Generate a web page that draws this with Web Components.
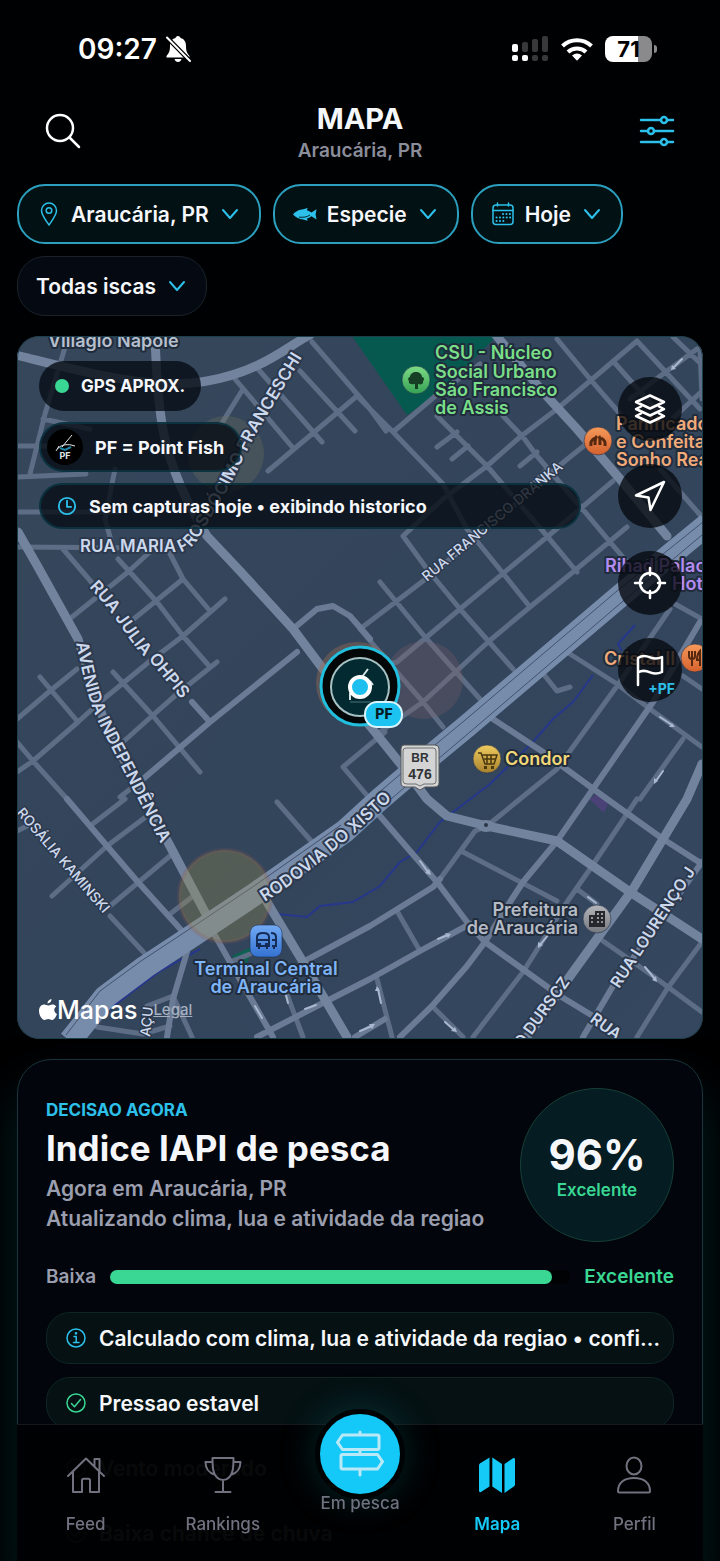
<!DOCTYPE html>
<html lang="pt-BR">
<head>
<meta charset="utf-8">
<meta name="viewport" content="width=device-width, initial-scale=1">
<title>Mapa</title>
<style>
    :root {
        --accent: #2cc0ea;
        --good: #3ad794;
        --text: #f5f7fb;
        --muted: #9b9eae;
        --dim: #70727f;
    }

    html {
        background: #000102;
    }

    body {
        margin: 0;
        color: var(--text);
        font-family: Inter, "Liberation Sans", sans-serif;
        font-weight: 600;
    }
</style>
</head>
<body>
<fishing-app></fishing-app>

<script>
// line icons, drawn with currentColor
const icons = {
    search: { box: '0 0 36 36', body: '<circle cx="15" cy="15" r="13"/><path d="M24.500 24.500 34 34"/>' },
    sliders: { box: '0 0 36 30', body: '<path d="M2 4h20M28 4h6M2 15h7M15 15h19M2 26h20M28 26h6"/><circle cx="25" cy="4" r="3"/><circle cx="12" cy="15" r="3"/><circle cx="25" cy="26" r="3"/>' },
    chevron: { box: '0 0 18 18', body: '<path d="M2 5l7 8 7-8"/>' },
    pin: { box: '0 0 24 24', body: '<path d="M12 23C8 17 4.500 13 4.500 8.500a7.500 7.500 0 0 1 15 0C19.500 13 16 17 12 23z"/><circle cx="12" cy="8.500" r="2.800"/>' },
    fish: { box: '0 0 26 16', body: '<path fill="currentColor" stroke="none" d="M0 8C4 4 7 3 11 2.500L16 1l-1 2.500c2 .7 3.500 1.500 5 2.500l5.500-3.500-1 5.500 1 5.500-5.500-3.500c-1.500 1.300-3.500 2.200-5 2.500l1 2.500-5-1.500C7 13 3 11.500 0 8z"/><path stroke="#04171b" stroke-width="1" d="M7 11c4 .5 8 0 11-2"/>' },
    calendar: { box: '0 0 24 24', body: '<rect x="2" y="3" width="20" height="19.500" rx="3"/><path d="M2 8.500h20M6.500 1v3M17.500 1v3"/><path stroke-dasharray=".1 3.300" stroke-width="2" d="M12 12h8M5.500 15.500h14M5.500 19h9"/>' },
    clock: { box: '0 0 22 22', body: '<circle cx="11" cy="11" r="9"/><path d="M11 5v7h4.500"/>' },
    info: { box: '0 0 22 22', body: '<circle cx="11" cy="11" r="9"/><path d="M9 9.500h2.200V15.500M8.500 15.500h5.500"/><circle cx="11" cy="6.300" r=".6"/>' },
    check: { box: '0 0 22 22', body: '<circle cx="11" cy="11" r="9"/><path d="M6.500 11.500l3 3.300 6-7.300"/>' },
    layers: { box: '0 0 32 32', body: '<path d="M16 2.500l14 6.500-14 6.500L2 9zM7 13.500 2 16l14 6.500L30 16l-5-2.500M7 20.500 2 23l14 6.500L30 23l-5-2.500"/>' },
    navigate: { box: '0 0 32 32', body: '<path d="M30 2 16.500 30 14.500 17.500 2 15.500z"/>' },
    locate: { box: '0 0 32 32', body: '<circle cx="16" cy="16" r="10"/><path d="M16 1v7M16 24v7M1 16h7M24 16h7"/>' },
    flag: { box: '0 0 32 32', body: '<path d="M4 31V4c4-3 8-2.500 12-.7s8 1.700 12-.3v15c-4 2-8 2-12 .3S8 16 4 18.500"/>' },
    home: { box: '0 0 40 40', body: '<path d="M2 21 20 3.500 38 21M7 17v20h9V25.500c0-1 .7-1.800 1.800-1.800h4.400c1 0 1.800.8 1.800 1.800V37h9V17M28.500 11V4h5v12"/>' },
    trophy: { box: '0 0 40 40', body: '<path d="M9.500 3h21c0 4 0 9-1 13-1 4.500-4.500 9-9.500 9s-8.500-4.500-9.500-9c-1-4-1-9-1-13zM20 25v12M12.500 37h15M9.500 7H2.500c0 6 3.500 11 9 12.500M30.500 7h7c0 6-3.500 11-9 12.500"/>' },
    signs: { box: '0 0 48 48', body: '<path d="M24 2v3M24 19.500v5M24 39v6M6.500 5H41.500a1.500 1.500 0 0 1 1.500 1.500v11.500a1.500 1.500 0 0 1-1.500 1.500H6.500L1.500 12.300zM6.500 24.500H41.500L46.500 31.700 41.500 39H6.500A1.500 1.500 0 0 1 5 37.500V26a1.500 1.500 0 0 1 1.500-1.500z"/>' },
    map: { box: '0 0 40 40', body: '<path fill="currentColor" stroke="none" d="M12.500 2.500v29L4 37c-1 .6-2 0-2-1.200V11c0-1.200.3-2 1.200-2.700zM15.300 2.500 25 9v29l-9.700-6.500zM27.500 9l8.500-5.700c1-.6 2 0 2 1.200v24.800c0 1-.3 1.700-1.200 2.300L27.500 38z"/>' },
    person: { box: '0 0 40 40', body: '<ellipse cx="20" cy="11" rx="7.500" ry="8.500"/><path d="M4 36c0-8 6-13 16-13s16 5 16 13c0 .7-.5 1.500-1.500 1.500h-29c-1 0-1.500-.8-1.500-1.500z"/>' }
}

class UiIcon extends HTMLElement {
    constructor() {
        super()
        this.attachShadow({ mode: 'open' })
    }

    connectedCallback() {
        const icon = icons[this.getAttribute('name')]

        this.shadowRoot.innerHTML = `
            <svg viewBox="${icon.box}" aria-hidden="true">${icon.body}</svg>
            <style>
            :host {
                display: block;
                flex: none;
                width: 24px;
            }

            svg {
                display: block;
                width: 100%;
                overflow: visible;
                fill: none;
                stroke: currentColor;
                stroke-width: var(--stroke, 2);
                stroke-linecap: round;
                stroke-linejoin: round;
            }
            </style>
        `
    }
}

class StatusBar extends HTMLElement {
    constructor() {
        super()
        this.attachShadow({ mode: 'open' })
    }

    connectedCallback() {
        this.shadowRoot.innerHTML = /* html */ `
            <div class="side">
                <time>09:27</time>
                <svg width="26" height="28" viewBox="0 0 26 28" fill="#fff">
                    <path d="M13 1c1.500 0 2.300 1 2.500 2 4 1 5.500 4 5.500 8 0 6 1.500 7.500 3.500 10v1.500h-23V21C3.500 18.500 5 17 5 11c0-4 1.500-7 5.500-8 .2-1 1-2 2.500-2z"/>
                    <path d="M9.500 24h7c-.5 2-1.800 3-3.500 3s-3-1-3.500-3z"/>
                    <path d="M2 2.500 25 26" stroke="#000" stroke-width="4.500"/>
                    <path d="M2 2.500 25 26" stroke="#fff" stroke-width="2" stroke-linecap="round"/>
                </svg>
            </div>
            <div class="side">
                <svg width="38" height="26" viewBox="0 0 38 26" fill="#fff">
                    <rect x="1" y="8" width="6" height="8" rx="2"/>
                    <rect x="1" y="19" width="6" height="6" rx="2"/>
                    <rect x="11" y="19" width="6" height="6" rx="2"/>
                    <g fill="#38383a">
                        <rect x="11" y="6" width="6" height="10" rx="2"/>
                        <rect x="21" y="3" width="6" height="13" rx="2"/>
                        <rect x="31" y="0" width="6" height="16" rx="2"/>
                        <rect x="21" y="19" width="6" height="6" rx="2"/>
                        <rect x="31" y="19" width="6" height="6" rx="2"/>
                    </g>
                </svg>
                <svg width="32" height="24" viewBox="0 0 32 24" fill="none" stroke="#fff" stroke-width="4">
                    <path d="M1.500 9a21 21 0 0 1 29 0M7 15a13 13 0 0 1 18 0"/>
                    <path fill="#fff" stroke="none" d="M11 18.500a8 8 0 0 1 10 0l-5 5.300z"/>
                </svg>
                <div class="battery"><span>71</span></div>
            </div>
            <style>
            :host {
                display: flex;
                justify-content: space-between;
                align-items: center;
                height: 98px;
                padding: 0 47px 0 61px;
            }

            .side {
                display: flex;
                align-items: center;
                gap: 8px;
            }

            .side + .side {
                gap: 12px;
            }

            time {
                font-size: 28px;
                color: #fff;
            }

            .battery {
                position: relative;
                width: 47px;
                height: 26px;
                border-radius: 8px;
                background: linear-gradient(90deg, #fff 71%, #8a8a8c 71%);
                color: #000;
                font-size: 22px;
                font-weight: 700;
                line-height: 26px;
                text-align: center;
                margin-right: 4px;
            }

            .battery::after {
                content: '';
                position: absolute;
                left: 49px;
                top: 9px;
                width: 3px;
                height: 8px;
                border-radius: 0 3px 3px 0;
                background: #8a8a8c;
            }
            </style>
        `
    }
}

class AppHeader extends HTMLElement {
    constructor() {
        super()
        this.attachShadow({ mode: 'open' })
    }

    connectedCallback() {
        this.shadowRoot.innerHTML = /* html */ `
            <button aria-label="Buscar"><ui-icon name="search"></ui-icon></button>
            <div class="titles">
                <h1><slot name="title"></slot></h1>
                <p><slot name="place"></slot></p>
            </div>
            <button class="filters" aria-label="Filtros"><ui-icon name="sliders"></ui-icon></button>
            <style>
            :host {
                display: flex;
                justify-content: space-between;
                align-items: flex-start;
                padding: 4px 28px 18px;
            }

            .titles {
                text-align: center;
            }

            h1, p {
                margin: 0;
            }

            h1 {
                font-size: 29px;
                font-weight: 700;
                line-height: 34px;
            }

            p {
                font-size: 19px;
                line-height: 30px;
                color: #8b8d9b;
            }

            button {
                display: flex;
                align-items: center;
                height: 58px;
                padding: 0;
                border: 0;
                background: none;
                color: #fff;
            }

            button ui-icon {
                width: 36px;
                --stroke: 2.500;
            }

            .filters {
                color: var(--accent);
            }
            </style>
        `
    }
}

class FilterChip extends HTMLElement {
    constructor() {
        super()
        this.attachShadow({ mode: 'open' })
    }

    connectedCallback() {
        const icon = this.getAttribute('icon')

        this.shadowRoot.innerHTML = `
            <button aria-haspopup="listbox">
                ${icon ? `<ui-icon name="${icon}"></ui-icon>` : ''}
                <slot></slot>
                <ui-icon class="arrow" name="chevron"></ui-icon>
            </button>
            <style>
            :host {
                display: block;
            }

            button {
                display: flex;
                align-items: center;
                gap: 10px;
                height: 60px;
                padding: 0 18px;
                border: 1px solid #1a222b;
                border-radius: 28px;
                background: #050a12;
                color: var(--text);
                font: inherit;
                font-size: 21px;
            }

            :host([active]) button {
                border: 2px solid #2b9fbd;
                background: #021114;
            }

            ui-icon {
                color: var(--accent);
                --stroke: 1.500;
            }

            .arrow {
                width: 18px;
                --stroke: 2;
                margin: 0 2px;
            }
            </style>
        `
    }
}

class MapPill extends HTMLElement {
    constructor() {
        super()
        this.attachShadow({ mode: 'open' })
    }

    connectedCallback() {
        this.shadowRoot.innerHTML = /* html */ `
            <slot name="mark"></slot>
            <span><slot></slot></span>
            <style>
            :host {
                box-sizing: border-box;
                display: flex;
                align-items: center;
                gap: 12px;
                height: 50px;
                padding: 0 16px;
                border-radius: 25px;
                background: rgba(6, 12, 20, .8);
                font-size: 17px;
                font-weight: 700;
            }

            :host([outlined]) {
                border: 2px solid rgba(8, 66, 82, .6);
                font-size: 18px;
            }

            :host([wide]) {
                align-self: stretch;
                height: 46px;
            }
            </style>
        `
    }
}

class MapButton extends HTMLElement {
    constructor() {
        super()
        this.attachShadow({ mode: 'open' })
    }

    connectedCallback() {
        this.shadowRoot.innerHTML = `
            <button aria-label="${this.getAttribute('label')}">
                <ui-icon name="${this.getAttribute('icon')}"></ui-icon>
                <slot></slot>
            </button>
            <style>
            :host {
                display: block;
            }

            button {
                position: relative;
                display: flex;
                align-items: center;
                justify-content: center;
                width: 64px;
                height: 64px;
                padding: 0;
                border: 0;
                border-radius: 50%;
                background: rgba(5, 9, 14, .78);
                color: #fff;
                font: inherit;
            }

            ui-icon {
                width: 32px;
                --stroke: 2.500;
            }

            ::slotted(b) {
                position: absolute;
                right: 7px;
                bottom: 5px;
                color: var(--accent);
                font-size: 14px;
                font-weight: 700;
            }
            </style>
        `
    }
}

// street groups by width, as path data in map units
const streets = {
    small: `
        M360 400 393 433 443 485 467 530 502 573 530 608 M437 417 487 467 547 537 577 573
        M427 570 403 537 443 500 487 467 520 438 557 410 590 382 637 342
        M393 433 440 393 480 365 M503 417 523 438 537 457 580 507 610 543 640 578
        M437 448 457 433 M452 460 468 447 M520 467 537 453
        M360 630 423 582 487 530 565 462 590 442
        M340 680 397 663 460 610 547 538 613 482 M380 733 423 703 488 643 530 608 573 573 627 528
        M427 570 460 610 513 670 M380 583 425 638 480 700 M360 630 383 657 423 703 443 728
        M557 340 590 380 640 438 M637 342 700 410 M697 350 663 375 630 400 M673 338 702 366
        M613 362 668 424 702 392 M660 470 702 518 M547 470 520 500 M700 350 702 400
        M258 370 322 443 M300 372 355 432 M312 343 370 410 386 432 M357 397 268 472 M243 390 222 424 M235 380 293 449
        M18 447 52 447 M30 475 45 415 66 345 M18 478 86 475 M18 513 120 513 M43 420 90 430
        M115 470 105 520 112 545 M18 548 150 549 M63 550 93 585
        M118 560 157 603 183 637 210 668 M165 545 183 580 210 612 M72 618 128 573 153 550
        M130 623 183 580 M17 720 50 692 77 670 M100 703 150 662 183 637 225 600
        M17 773 33 762 78 723 100 703 M123 743 152 717 177 695 217 663 M40 678 78 723
        M113 673 153 717 200 773 M17 743 33 762 67 800 M120 798 143 780 M90 827 125 800
        M52 897 107 847 147 817 M110 907 170 857 M170 915 192 898
        M110 917 147 957 M17 832 27 827 M147 1007 173 997 192 1038 M97 1028 143 1035 170 1027
        M230 963 250 955 M343 768 385 733 M343 768 370 800
        M277 803 312 843 M397 912 420 952 M377 980 392 1038 M432 1007 463 1038
        M463 853 557 902 M577 890 597 905 M603 942 653 977 702 1013 M702 943 667 990 637 1038
        M487 827 520 800 557 770 617 687 670 610 M637 800 590 870 567 903 523 973 473 1038
        M640 800 683 740 M570 655 617 685 650 710 702 748 M545 677 557 692 570 688
        M487 827 475 832 440 880 M675 605 702 620 M683 677 702 690 M283 985 303 1038`,
    medium: `
        M143 780 210 723 297 653 M192 703 210 723 M293 630 317 610 333 607 350 617 370 640
        M67 800 107 847 137 882 183 933 M187 953 173 1000 167 1038 M303 963 370 927 433 888 440 880
        M257 1038 317 1007 370 980 420 952 470 925 M355 1038 385 1020
        M380 817 410 852 437 883 467 923 485 943 560 997 593 1017
        M700 623 653 703 593 790 557 842 523 883 510 903 485 943 467 967 432 1007 400 1038
        M493 720 543 753 607 800 663 840 702 865 M702 863 613 987 583 1038
        M213 933 230 963 273 1038`,
    large: `
        M18 533 38 568 78 640 M78 640 105 725 150 810 170 847 207 917 M267 903 303 963 347 1038
        M702 765 687 800 633 890 573 973 527 1038
        M427 800 447 817 487 827 557 842 630 893 702 940
        M20 357C80 372 150 392 207 382S290 345 310 336
        M155 335C156 370 158 400 162 425S178 490 207 537 M207 537 240 572 293 630 323 670 370 727 407 773 427 800
        M495 335 543 393 577 430 620 480 667 537`
}

class FishMap extends HTMLElement {
    constructor() {
        super()
        this.attachShadow({ mode: 'open' })
    }

    connectedCallback() {
        this.shadowRoot.innerHTML = /* html */ `
            <svg class="canvas" viewBox="17 337 686 703" role="img" aria-label="Mapa de Araucária">
                <defs>
                    <linearGradient id="land" x1="0" y1="0" x2="1" y2="1">
                        <stop offset="0" stop-color="#36475b"/>
                        <stop offset=".5" stop-color="#33455b"/>
                        <stop offset="1" stop-color="#35475f"/>
                    </linearGradient>
                    <linearGradient id="blue" x1="0" y1="0" x2="0" y2="1">
                        <stop offset="0" stop-color="#72aaf4"/><stop offset="1" stop-color="#3472d2"/>
                    </linearGradient>
                    <linearGradient id="gold" x1="0" y1="0" x2="0" y2="1">
                        <stop offset="0" stop-color="#efcc5f"/><stop offset="1" stop-color="#a8812d"/>
                    </linearGradient>
                    <linearGradient id="orange" x1="0" y1="0" x2="0" y2="1">
                        <stop offset="0" stop-color="#f69a5b"/><stop offset="1" stop-color="#d4612d"/>
                    </linearGradient>
                    <linearGradient id="green" x1="0" y1="0" x2="0" y2="1">
                        <stop offset="0" stop-color="#7edb86"/><stop offset="1" stop-color="#35a254"/>
                    </linearGradient>
                    <linearGradient id="grey" x1="0" y1="0" x2="0" y2="1">
                        <stop offset="0" stop-color="#b4b6bb"/><stop offset="1" stop-color="#75787e"/>
                    </linearGradient>
                    <path id="maria" d="M80 553H178Q189 553 198 540L228 490 254 438 324 322"/>
                    <path id="julia" d="M89 588Q108 608 124 632T150 662L206 730"/>
                    <path id="avenida" d="M76 644 83 676Q92 714 106 738L182 886"/>
                    <path id="rosalia" d="M16 814 130 946"/>
                    <path id="rodovia" d="M265 903Q325 865 415 778"/>
                    <path id="dranka" d="M427 583 600 439"/>
                    <path id="lourenco" d="M619 990 730 820"/>
                    <path id="durscz" d="M522 1050 600 942"/>
                </defs>

                <rect x="17" y="337" width="686" height="703" fill="url(#land)"/>
                <path fill="#06594f" d="M352 337 407 416 440 393 497 337z"/>
                <path fill="#0c6152" d="M232 957 253 947 247 965 238 963z"/>
                <path fill="#4a4276" d="M589 800l10-6 10 8-5 12z"/>

                <g fill="none" stroke="#26378d" stroke-width="2">
                    <path d="M635 626 618 645 622 652M593 676 573 703 553 720 533 743 490 785 440 823 417 853 400 863 380 887 353 903 320 907 307 918 267 914M200 950 160 972 87 1027"/>
                </g>

                <g class="roads">
                    <path stroke="#5d6d86" stroke-width="5" d="${streets.small}"/>
                    <path stroke="#6b7b95" stroke-width="6" d="${streets.medium}"/>
                    <path stroke="#72839d" stroke-width="9" d="${streets.large}"/>
                    <ellipse cx="486" cy="827" rx="9" ry="6" fill="#72839d"/>
                </g>
                <circle cx="486" cy="826" r="2" fill="#2a3648"/>

                <g fill="none" stroke-linejoin="round">
                    <path stroke="#778bab" stroke-width="23" d="M708 525 620 597 467 727 427 760 380 800 345 832 258 893 180 945 145 968 105 998 70 1042"/>
                    <path stroke="#42526f" stroke-width="1" d="M708 519 617 592 464 722 424 755 376 796 M708 531 622 603 470 733 431 766 384 806M341 826 254 887 176 939 141 962 100 992 66 1036"/>
                </g>

                <g fill="none" stroke="#a9b8ce" stroke-width="2" stroke-linecap="round">
                    <path d="M673 369l9-9M420 862l8 11M438 940l10-4M540 946l8-10M378 990l3 14M360 1032l12-5M445 1023l9 8M588 898l8 6M645 968l10 12M660 718l12 8M656 782l7-10M255 1007l7 12M305 1010l11-4M286 996l2 8"/>
                </g>
                <path fill="#a9b8ce" d="M671 371l1-5 4 4zM431 876l-6-2 4-4zM451 935l-3 4-3-5zM538 949l0-6 5 3zM377 987l-2 5h5zM375 1025l-3 5-3-5zM457 1033l-6-1 4-4zM657 983l-5-2 4-4zM675 728l-6 0 3-4zM654 785l0-6 4 3z"/>

                <g>
                    <circle cx="225" cy="897" r="46" fill="#9a8f4d" fill-opacity=".32" stroke="#8b5b51" stroke-opacity=".22" stroke-width="4"/>
                    <circle cx="424" cy="681" r="39" fill="#7a5e68" fill-opacity=".3"/>
                    <circle cx="226" cy="455" r="38" fill="#717559" fill-opacity=".3"/>
                    <circle cx="357" cy="684" r="41" fill="#9a6c50" fill-opacity=".4"/>
                </g>

                <g class="street" font-size="17">
                    <text><textPath href="#maria">RUA MARIA PROSDÓCIMO FRANCESCHI</textPath></text>
                    <text><textPath href="#julia">RUA JULIA OHPIS</textPath></text>
                    <text><textPath href="#avenida">AVENIDA INDEPENDÊNCIA</textPath></text>
                    <text><textPath href="#rodovia">RODOVIA DO XISTO</textPath></text>
                    <text font-size="16"><textPath href="#lourenco">RUA LOURENÇO J</textPath></text>
                    <text font-size="16"><textPath href="#durscz">O DURSCZ</textPath></text>
                    <text font-size="16" transform="translate(589 1022) rotate(36)">RUA</text>
                </g>
                <g class="street thin" font-size="14">
                    <text><textPath href="#rosalia">ROSÁLIA KAMINSKI</textPath></text>
                    <text><textPath href="#dranka">RUA FRANCISCO DRANKA</textPath></text>
                    <text transform="translate(150 1038) rotate(-84)">AÇU</text>
                </g>

                <g class="place">
                    <text x="48" y="348" fill="#b6bfcd">Villagio Napole</text>
                    <g fill="#7ade89">
                        <text x="435" y="360">CSU - Núcleo</text>
                        <text x="435" y="379">Social Urbano</text>
                        <text x="435" y="397">São Francisco</text>
                        <text x="435" y="415">de Assis</text>
                    </g>
                    <g fill="#f2ab78">
                        <text x="616" y="431">Panificadora</text>
                        <text x="616" y="449">e Confeitaria</text>
                        <text x="616" y="467">Sonho Real</text>
                        <text x="604" y="666">Cristal II</text>
                    </g>
                    <g fill="#b48bf0">
                        <text x="605" y="573">Rihad Palace</text>
                        <text x="672" y="591">Hotel</text>
                    </g>
                    <text x="505" y="766" fill="#f3d878">Condor</text>
                    <g fill="#b5bbc5" text-anchor="end">
                        <text x="578" y="917">Prefeitura</text>
                        <text x="578" y="935">de Araucária</text>
                    </g>
                    <g fill="#7fb5f7" text-anchor="middle">
                        <text x="266" y="976">Terminal Central</text>
                        <text x="266" y="994">de Araucária</text>
                    </g>
                </g>

                <g stroke="#23304a" stroke-opacity=".6">
                    <circle cx="416" cy="381" r="14" fill="url(#green)"/>
                    <circle cx="598" cy="442" r="14" fill="url(#orange)"/>
                    <circle cx="695" cy="659" r="14" fill="url(#orange)"/>
                    <circle cx="487" cy="760" r="14" fill="url(#gold)"/>
                    <circle cx="597" cy="920" r="14" fill="url(#grey)"/>
                    <rect x="250" y="926" width="32" height="32" rx="8" fill="url(#blue)"/>
                </g>

                <!-- tree -->
                <path fill="#173f26" d="M415 390v-5c-5 1-7-1-6-3-2-2 0-4 1-4 0-3 3-5 6-5s6 2 6 5c2 0 3 3 1 4 1 3-2 4-5 3v5z"/>
                <!-- croissant -->
                <path fill="none" stroke="#56280f" stroke-width="3" d="M591 447c-1-5 2-7 4-8M595 446c0-5 1-8 2-9M600 446c0-5 0-8-1-9M605 447c1-5-2-7-4-8"/>
                <!-- fork and knife -->
                <path fill="none" stroke="#56280f" stroke-width="2" d="M689 652v5q0 3 3 3t3-3v-5M692 652v15M700 667v-15q-3 3-3 9h3"/>
                <!-- shopping cart -->
                <path fill="none" stroke="#4b390e" stroke-width="1.500" d="M478 754h3l4 11h9l3-9h-15M484 760h12M487 756v9M491 756v9"/>
                <path fill="#4b390e" d="M484 767h3v3h-3zM491 767h3v3h-3z"/>
                <!-- town hall -->
                <path fill="#26282d" fill-rule="evenodd" d="M589 928v-12h6v-4h10v16zM591 918v2h2v-2zM591 922v2h2v-2zM597 914v2h2v-2zM601 914v2h2v-2zM597 918v2h2v-2zM601 918v2h2v-2zM597 922v2h2v-2zM601 922v2h2v-2z"/>
                <!-- bus -->
                <g fill="none" stroke="#152c56" stroke-width="2">
                    <path d="M257 947v-9q0-4 6-4t6 4v9zM257 941h12M271 934q5 0 5 4v9h-4M272 941h4"/>
                    <path d="M259 948v2M267 948v2M274 948v2M258 945h3M265 945h3"/>
                </g>

                <!-- highway shield -->
                <path fill="#d3d4d3" stroke="#54565a" d="M404 746h31q4 0 4 4v34q0 4-5 4h-9l-5 3-5-3h-9q-5 0-5-4v-34q0-4 3-4z"/>
                <path fill="none" stroke="#6d6f72" d="M406 749h27q3 0 3 3v30q0 3-3 3h-9l-4 2-4-2h-9q-4 0-4-3v-30q0-3 3-3z"/>
                <g class="shield" text-anchor="middle">
                    <text x="420" y="763" font-size="12">BR</text>
                    <text x="420" y="780" font-size="14">476</text>
                </g>

                <!-- current position -->
                <circle cx="360" cy="687" r="39" fill="#030708" stroke="#22bedd" stroke-width="3"/>
                <circle cx="360" cy="688" r="29" fill="#032a31" stroke="#a7c2c4" stroke-width="2"/>
                <path fill="none" stroke="#d7e4e6" stroke-width="2" d="M362 678l6-8M350 694v7M370 682l3 4"/>
                <path stroke="#4b7378" d="M350 703h21"/>
                <circle cx="360" cy="688" r="10" fill="#1cbfee" stroke="#fff" stroke-width="4"/>
                <rect x="365" y="703" width="37" height="25" rx="12" fill="#1cc3f0" stroke="#d8f5fd" stroke-width="2"/>
                <text x="384" y="720" text-anchor="middle" font-size="14" font-weight="800" fill="#061c24">PF</text>
            </svg>

            <div class="overlay">
                <div class="pills">
                    <map-pill><i slot="mark" class="dot"></i>GPS APROX.</map-pill>
                    <map-pill outlined>
                        <svg slot="mark" class="logo" viewBox="0 0 36 36" aria-hidden="true">
                            <circle cx="18" cy="18" r="18" fill="#000"/>
                            <path fill="none" stroke="#dfe6ea" d="M25 6 15 18M10 20q7-7 18-3M12 17l-3 5"/>
                            <path fill="none" stroke="#1d84a5" stroke-width="2" d="M13 19l5 2 6-3"/>
                            <text x="18" y="30" text-anchor="middle" font-size="9" fill="#dfe6ea">PF</text>
                        </svg>
                        PF = Point Fish
                    </map-pill>
                    <map-pill outlined wide><ui-icon slot="mark" name="clock"></ui-icon>Sem capturas hoje • exibindo historico</map-pill>
                </div>
                <div class="buttons">
                    <map-button icon="layers" label="Camadas"></map-button>
                    <map-button icon="navigate" label="Navegar"></map-button>
                    <map-button icon="locate" label="Localizar"></map-button>
                    <map-button icon="flag" label="Adicionar ponto"><b>+PF</b></map-button>
                </div>
                <div class="credit">
                    <svg width="18" height="22" viewBox="0 0 18 22" fill="#fff" aria-hidden="true">
                        <path d="M12.500 0c.2 2.500-1.700 4.500-4 4.600C8.200 2.500 10.300.3 12.500 0zM17.300 7.500c-3 1.900-2.500 6.200.7 7.500-.8 2.500-2.800 6-5 6-1.500 0-2-.9-3.800-.9s-2.300.9-3.700.9C2.800 21 0 16 0 12c0-4.500 2.800-6.500 5.300-6.500 1.600 0 2.800 1 3.900 1 1 0 2.500-1.200 4.400-1.100 1.300 0 2.900.6 3.700 2.100z"/>
                    </svg>
                    <span>Mapas</span>
                    <a href="#legal">Legal</a>
                </div>
            </div>

            <style>
            :host {
                position: relative;
                display: block;
                overflow: hidden;
                border-radius: 22px;
            }

            :host::after {
                content: '';
                position: absolute;
                inset: 0;
                border: 1px solid #1d3f4b;
                border-radius: 22px;
                pointer-events: none;
            }

            .canvas {
                display: block;
                width: 100%;
            }

            .roads {
                fill: none;
                stroke-linejoin: round;
                stroke-linecap: round;
            }

            .street, .place {
                paint-order: stroke;
                stroke: #2c394c;
                stroke-width: 4px;
                stroke-linejoin: round;
            }

            .street {
                fill: #ccd8ec;
                font-weight: 600;
            }

            .thin {
                font-weight: 500;
                stroke-width: 3px;
            }

            .place {
                font-size: 18px;
                font-weight: 600;
                stroke: #202c3c;
            }

            .shield {
                font-family: "Liberation Sans", sans-serif;
                font-weight: 700;
                fill: #303236;
            }

            .overlay {
                position: absolute;
                inset: 0;
                display: grid;
                grid-template-columns: 1fr auto;
                grid-template-rows: 1fr auto;
                gap: 0 37px;
                padding: 25px 21px 14px 22px;
            }

            .pills {
                display: flex;
                flex-direction: column;
                align-items: flex-start;
                gap: 11px;
            }

            .dot {
                width: 14px;
                height: 14px;
                border-radius: 50%;
                background: var(--good);
            }

            .logo {
                width: 36px;
                margin-left: -10px;
            }

            map-pill ui-icon {
                width: 20px;
                color: var(--accent);
            }

            .buttons {
                display: flex;
                flex-direction: column;
                gap: 23px;
                padding-top: 16px;
            }

            .credit {
                display: flex;
                align-items: center;
                font-size: 25px;
                font-weight: 500;
                line-height: 30px;
                color: #fff;
            }

            .credit a {
                margin-left: 16px;
                color: #a5afbf;
                font-size: 15px;
            }
            </style>
        `
    }
}

class HintRow extends HTMLElement {
    constructor() {
        super()
        this.attachShadow({ mode: 'open' })
    }

    connectedCallback() {
        this.shadowRoot.innerHTML = `
            <ui-icon name="${this.getAttribute('icon')}"></ui-icon>
            <span><slot></slot></span>
            <style>
            :host {
                box-sizing: border-box;
                display: flex;
                align-items: center;
                gap: 12px;
                height: 52px;
                padding: 0 12px 0 18px;
                border: 1px solid #0e2624;
                border-radius: 24px;
                background: #051113;
                color: var(--text);
                font-size: 21px;
            }

            ui-icon {
                width: 22px;
                color: var(--good);
                --stroke: 1.500;
            }

            :host([icon="info"]) ui-icon {
                color: var(--accent);
            }

            span {
                overflow: hidden;
                white-space: nowrap;
                text-overflow: ellipsis;
            }
            </style>
        `
    }
}

class ScoreCard extends HTMLElement {
    constructor() {
        super()
        this.attachShadow({ mode: 'open' })
    }

    connectedCallback() {
        this.shadowRoot.innerHTML = /* html */ `
            <div class="top">
                <div class="summary">
                    <small>DECISAO AGORA</small>
                    <h2>Indice IAPI de pesca</h2>
                    <p>Agora em Araucária, PR</p>
                    <p>Atualizando clima, lua e atividade da regiao</p>
                </div>
                <div class="score"><strong>96%</strong><span>Excelente</span></div>
            </div>
            <div class="scale">
                <span>Baixa</span>
                <div class="track" role="meter" aria-label="Indice" aria-valuenow="96" aria-valuemin="0" aria-valuemax="100"><div></div></div>
                <span class="good">Excelente</span>
            </div>
            <div class="hints"><slot></slot></div>
            <style>
            :host {
                display: block;
                padding: 28px;
                border: 1px solid #19343c;
                border-radius: 34px;
                background: #02060c;
                box-shadow: 0 30px 50px #001e20;
            }

            h2, p {
                margin: 0;
            }

            .top {
                display: flex;
                align-items: center;
                justify-content: space-between;
            }

            .summary {
                padding-top: 4px;
            }

            small {
                display: block;
                font-size: 17px;
                font-weight: 700;
                line-height: 20px;
                color: var(--accent);
            }

            h2 {
                margin: 6px 0 4px;
                font-size: 35px;
                font-weight: 700;
                line-height: 44px;
            }

            p {
                font-size: 21px;
                line-height: 30px;
                color: var(--muted);
            }

            .score {
                flex: none;
                box-sizing: border-box;
                display: flex;
                flex-direction: column;
                align-items: center;
                justify-content: center;
                width: 154px;
                height: 154px;
                border: 1px solid #164036;
                border-radius: 50%;
                background: #041c22;
                color: var(--good);
                font-size: 17px;
            }

            strong {
                color: var(--text);
                font-size: 42px;
                font-weight: 700;
                line-height: 50px;
            }

            .scale {
                display: flex;
                align-items: center;
                gap: 14px;
                margin: 21px 0;
                font-size: 19px;
                line-height: 28px;
                color: var(--muted);
            }

            .good {
                color: var(--good);
            }

            .track {
                flex: 1;
                height: 14px;
                border-radius: 7px;
                background: #010203;
            }

            .track div {
                width: 96%;
                height: 100%;
                border-radius: 7px;
                background: var(--good);
            }

            .hints {
                display: flex;
                flex-direction: column;
                gap: 13px;
            }
            </style>
        `
    }
}

class TabItem extends HTMLElement {
    constructor() {
        super()
        this.attachShadow({ mode: 'open' })
    }

    connectedCallback() {
        this.shadowRoot.innerHTML = `
            <a href="#${this.getAttribute('icon')}">
                <div class="icon"><ui-icon name="${this.getAttribute('icon')}"></ui-icon></div>
                <span><slot></slot></span>
            </a>
            <style>
            :host {
                flex: 1;
                display: block;
            }

            a {
                display: flex;
                flex-direction: column;
                align-items: center;
                gap: 18px;
                padding-top: 30px;
                color: var(--dim);
                font-size: 17px;
                font-weight: 500;
                line-height: 22px;
                text-decoration: none;
            }

            ui-icon {
                width: 40px;
                --stroke: 2;
            }

            :host([current]) a {
                color: #16caf8;
                font-weight: 600;
            }

            :host([main]) a {
                gap: 0;
                padding-top: 0;
                margin-top: -16px;
            }

            :host([main]) .icon {
                display: flex;
                align-items: center;
                justify-content: center;
                width: 80px;
                height: 80px;
                border: 5px solid #000304;
                border-radius: 50%;
                background: #14c8f7;
                color: #b9e9f7;
                box-shadow: 0 0 36px rgba(12, 130, 140, .3);
            }

            :host([main]) ui-icon {
                width: 48px;
                --stroke: 3;
            }

            :host([main]) span {
                position: relative;
                margin-top: -7px;
            }
            </style>
        `
    }
}

class TabBar extends HTMLElement {
    constructor() {
        super()
        this.attachShadow({ mode: 'open' })
    }

    connectedCallback() {
        this.shadowRoot.innerHTML = /* html */ `
            <nav><slot></slot></nav>
            <style>
            :host {
                position: fixed;
                left: 17px;
                right: 17px;
                bottom: 0;
            }

            nav {
                display: flex;
                align-items: flex-start;
                height: 136px;
                border-top: 1px solid #15181c;
                background: rgba(0, 1, 2, .97);
            }
            </style>
        `
    }
}

class FishingApp extends HTMLElement {
    constructor() {
        super()
        this.attachShadow({ mode: 'open' })
    }

    connectedCallback() {
        this.shadowRoot.innerHTML = /* html */ `
            <status-bar></status-bar>
            <app-header>
                <span slot="title">MAPA</span>
                <span slot="place">Araucária, PR</span>
            </app-header>
            <div class="chips">
                <filter-chip active icon="pin">Araucária, PR</filter-chip>
                <filter-chip active icon="fish">Especie</filter-chip>
                <filter-chip active icon="calendar">Hoje</filter-chip>
                <filter-chip>Todas iscas</filter-chip>
            </div>
            <fish-map></fish-map>
            <score-card>
                <hint-row icon="info">Calculado com clima, lua e atividade da regiao • confianca alta</hint-row>
                <hint-row icon="check">Pressao estavel</hint-row>
                <hint-row icon="check">Vento moderado</hint-row>
                <hint-row icon="check">Baixa chance de chuva</hint-row>
            </score-card>
            <tab-bar>
                <tab-item icon="home">Feed</tab-item>
                <tab-item icon="trophy">Rankings</tab-item>
                <tab-item icon="signs" main>Em pesca</tab-item>
                <tab-item icon="map" current>Mapa</tab-item>
                <tab-item icon="person">Perfil</tab-item>
            </tab-bar>
            <style>
            :host {
                box-sizing: border-box;
                display: block;
                height: 100vh;
                padding: 0 17px;
                overflow: hidden auto;
                scrollbar-width: none;
            }

            .chips {
                display: flex;
                flex-wrap: wrap;
                gap: 12px;
                margin-bottom: 20px;
            }

            score-card {
                margin-top: 20px;
            }
            </style>
        `
    }
}

customElements.define('ui-icon', UiIcon)
customElements.define('status-bar', StatusBar)
customElements.define('app-header', AppHeader)
customElements.define('filter-chip', FilterChip)
customElements.define('map-pill', MapPill)
customElements.define('map-button', MapButton)
customElements.define('fish-map', FishMap)
customElements.define('hint-row', HintRow)
customElements.define('score-card', ScoreCard)
customElements.define('tab-item', TabItem)
customElements.define('tab-bar', TabBar)
customElements.define('fishing-app', FishingApp)
</script>
</body>
</html>
